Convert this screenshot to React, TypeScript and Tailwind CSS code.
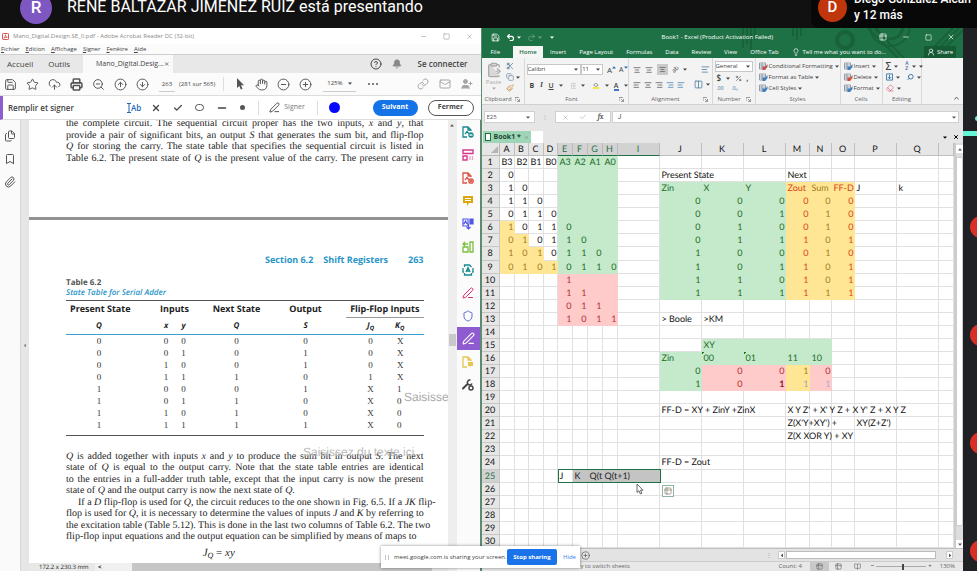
import React from 'react';
import {
  AlignCenter, AlignLeft, AlignRight, ArrowDownCircle, ArrowUpCircle, Bell, Bookmark, Check, CircleHelp,
  ClipboardPaste, CloudUpload, Copy, Files, Hand, Lightbulb, Link, Mail, Minus, MinusCircle,
  Paperclip, PenLine, Percent, PlusCircle, Printer, Redo2, Save, Scissors, Search, Shield, Square, Star, Undo2,
  UserPlus, UserRound, X, ZoomOut, Table2, Paintbrush, Eraser, TextAlignStart, Columns2, BookOpen,
} from 'lucide-react';

const ui = "font-['Open_Sans','Noto_Sans',sans-serif]";

function Caret({ className = '' }: { className?: string }) {
  return (
    <svg viewBox="0 0 4 3" className={`h-[3px] w-1 shrink-0 ${className}`} aria-hidden="true">
      <path d="M0 .5h4L2 2.8z" fill="currentColor" />
    </svg>
  );
}

function IconButton({ label, children, className = '' }: { label: string; children: React.ReactNode; className?: string }) {
  return (
    <button type="button" aria-label={label} className={`flex shrink-0 items-center justify-center ${className}`}>
      {children}
    </button>
  );
}

/* ---------- Meet header ---------- */

function MeetHeader() {
  return (
    <header className="flex h-7 shrink-0 justify-between overflow-hidden bg-[#111111] font-[Roboto,sans-serif] text-white">
      <div className="flex items-start">
        <span className="-mt-2 ml-5 flex size-8 items-center justify-center rounded-full bg-[#7e57c2] text-[17px] font-medium">R</span>
        <h1 className="-mt-1 ml-[15px] text-base leading-[22px] whitespace-nowrap">RENE BALTAZAR JIMENEZ RUIZ está presentando</h1>
      </div>
      <div className="flex w-[166px] items-start overflow-hidden rounded-bl-lg bg-[#080808] pl-[7px]">
        <span className="-mt-[7px] flex size-[29px] shrink-0 items-center justify-center rounded-full bg-[#bf360c] text-[15px] font-medium">D</span>
        <p className="-mt-[9px] ml-[7px] text-xs leading-4 font-medium whitespace-nowrap">
          Diego Gonzalez Alcan
          <br />y 12 más
        </p>
      </div>
    </header>
  );
}

/* ---------- Acrobat ---------- */

const toolGlyph = 'size-[13px] text-[#555555]';

function AcrobatChrome() {
  return (
    <div className={`shrink-0 text-[#444444] ${ui}`}>
      <div className="flex h-4 items-center bg-white pr-2 pl-0.5 text-[6px] text-[#8a8a8a]">
        <svg viewBox="0 0 8 8" className="mr-1 size-[7px]" aria-hidden="true">
          <rect x=".5" y=".5" width="7" height="7" rx="1" fill="#fff" stroke="#c33" />
          <path d="M2 6c1-1 2-3 2-4 0 2 1 3 2 3-2 0-3 0-4 1z" fill="none" stroke="#c33" strokeWidth=".8" />
        </svg>
        <span className="flex-1 whitespace-nowrap">Mano_Digital.Design.SE_0.pdf - Adobe Acrobat Reader DC (32-bit)</span>
        <span className="flex items-center gap-4 text-[#999999]">
          <Minus size={7} /><Square size={7} /><X size={7} />
        </span>
      </div>
      <nav className="flex h-2.5 items-center gap-1.5 bg-[#fbfbfb] pl-px text-[6px] leading-[10px]">
        {['Fichier', 'Edition', 'Affichage', 'Signer', 'Fenêtre', 'Aide'].map((m) => (
          <button key={m} type="button"><span className="underline">{m[0]}</span>{m.slice(1)}</button>
        ))}
      </nav>
      <div className="flex h-[19px] items-center border-t border-[#cfcfcf] bg-[#e8e8e8] text-[8px] leading-[18px]">
        <button type="button" className="ml-[7px]">Accueil</button>
        <button type="button" className="mr-[13px] ml-[15px]">Outils</button>
        <div className="flex h-full w-[90px] items-center justify-between bg-[#fafafa] pr-1 pl-[13px] text-[7px]">
          <span>Mano_Digital.Desig...</span>
          <X size={6} strokeWidth={3} />
        </div>
        <span className="flex-1" />
        <CircleHelp size={12} className="mr-2.5" />
        <Bell size={10} fill="#888888" className="mr-4 text-[#888888]" />
        <button type="button" className="mr-[13px] font-semibold">Se connecter</button>
      </div>
      <div className="flex h-[23px] items-center border-b border-[#dddddd] bg-[#fbfbfb] pl-1">
        <div className="flex items-center gap-[9px]">
          <IconButton label="Enregistrer"><Save className={toolGlyph} strokeWidth={1.8} /></IconButton>
          <IconButton label="Favoris"><Star className={toolGlyph} strokeWidth={1.8} /></IconButton>
          <IconButton label="Envoyer"><CloudUpload className={toolGlyph} strokeWidth={1.8} /></IconButton>
          <IconButton label="Imprimer"><Printer className={toolGlyph} strokeWidth={2.8} /></IconButton>
          <IconButton label="Rechercher"><ZoomOut className={toolGlyph} strokeWidth={1.8} /></IconButton>
          <IconButton label="Page précédente"><ArrowUpCircle className={toolGlyph} strokeWidth={1.8} /></IconButton>
          <IconButton label="Page suivante"><ArrowDownCircle className={toolGlyph} strokeWidth={1.8} /></IconButton>
        </div>
        <input aria-label="Page" defaultValue="263" className="ml-2.5 h-4 w-4 border-b border-[#cccccc] text-center text-[6px]" />
        <span className="ml-1 text-[6px] whitespace-nowrap">(281 sur 565)</span>
        <span className="mr-2.5 ml-2 h-3.5 w-px bg-[#dddddd]" />
        <div className="flex items-center gap-[9px]">
          <IconButton label="Sélection">
            <svg viewBox="0 0 12 12" className="size-3" fill="#555555"><path d="M3 0v10l2.300-2 1.500 3.500 1.700-.8L7 7.300h3z" /></svg>
          </IconButton>
          <IconButton label="Main"><Hand className={toolGlyph} strokeWidth={1.8} /></IconButton>
          <IconButton label="Zoom arrière"><MinusCircle className={toolGlyph} strokeWidth={1.8} /></IconButton>
          <IconButton label="Zoom avant"><PlusCircle className={toolGlyph} strokeWidth={1.8} /></IconButton>
        </div>
        <div className="ml-[11px] flex h-4 w-[33px] items-center justify-between border-b border-[#cccccc] px-1 text-[6px]">
          <select aria-label="Zoom" className="w-[18px] appearance-none"><option>125%</option></select>
          <Caret />
        </div>
        <span className="ml-3 flex gap-[2px]">
          {[0, 1, 2].map((i) => <i key={i} className="size-[2px] rounded-full bg-[#555555]" />)}
        </span>
        <span className="flex-1" />
        <div className="mr-2 flex gap-2.5 text-[#a5a5a5]">
          <Link size={12} /><Mail size={12} /><UserPlus size={12} fill="#a5a5a5" />
        </div>
      </div>
      <div className="flex h-6 items-center border-b border-l-[3px] border-[#dddddd] border-l-[#8b5fd0] bg-white pr-[7px] pl-[5px]">
        <span className="w-[119px] text-[8px] font-semibold whitespace-nowrap">Remplir et signer</span>
        <button type="button" className="flex items-center text-[8px] font-semibold text-[#1b65b5]">
          <svg viewBox="0 0 4 10" className="h-2.5 w-1" aria-hidden="true"><path d="M0 .5h4M0 9.5h4M2 .5v9" stroke="currentColor" fill="none" /></svg>Ab
        </button>
        <div className="ml-2.5 flex items-center gap-3">
          <X size={10} strokeWidth={3} />
          <Check size={10} strokeWidth={3} />
          <span className="h-[7px] w-[9px] rounded-full border border-[#555555]" />
          <Minus size={12} strokeWidth={3} />
          <span className="size-[5px] rounded-full bg-[#555555]" />
        </div>
        <span className="mr-2.5 ml-[13px] h-3.5 w-px bg-[#dddddd]" />
        <button type="button" className="flex items-center gap-1 text-[7px] text-[#777777]"><PenLine size={11} className="text-[#444444]" />Signer</button>
        <span className="mr-[11px] ml-3 h-3.5 w-px bg-[#dddddd]" />
        <span className="size-[11px] rounded-full bg-[#0808ff]" />
        <span className="flex-1" />
        <button type="button" className="h-4 w-[45px] rounded-full bg-[#1473e6] text-[7px] font-bold text-white">Suivant</button>
        <button type="button" className="ml-2.5 h-4 w-[46px] rounded-full border border-[#555555] text-[7px] font-bold">Fermer</button>
      </div>
    </div>
  );
}

function Justified({ children, last = true, indent = false }: { children: React.ReactNode; last?: boolean; indent?: boolean }) {
  return (
    <span className={`block whitespace-nowrap ${last ? '[text-align-last:justify]' : ''} ${indent ? 'pl-3' : ''}`}>{children}</span>
  );
}

const adderRows = [
  ['0', '0', '0', '0', '0', '0', 'X'],
  ['0', '0', '1', '0', '1', '0', 'X'],
  ['0', '1', '0', '0', '1', '0', 'X'],
  ['0', '1', '1', '1', '0', '1', 'X'],
  ['1', '0', '0', '0', '1', 'X', '1'],
  ['1', '0', '1', '1', '0', 'X', '0'],
  ['1', '1', '0', '1', '0', 'X', '0'],
  ['1', '1', '1', '1', '1', 'X', '0'],
];

function AdderTable() {
  return (
    <table className="w-full table-fixed border-y border-[#555555] text-center">
      <colgroup>
        <col className="w-[66px]" /><col className="w-[25px]" /><col className="w-[18px]" /><col className="w-[17px]" />
        <col className="w-[89px]" /><col className="w-[49px]" /><col className="w-[16px]" /><col className="w-[49px]" /><col />
      </colgroup>
      <thead className={`text-[8px] leading-4 font-bold text-[#222222] ${ui}`}>
        <tr className="h-4 text-[9px] whitespace-nowrap">
          <th className="pl-1 text-left">Present State</th><th /><th colSpan={2}>Inputs</th>
          <th>Next State</th><th>Output</th><th /><th colSpan={2} className="border-b border-[#999999]">Flip-Flop Inputs</th>
        </tr>
        <tr className="h-[17px] border-b border-[#3aa0d0] italic">
          <th>Q</th><th /><th>x</th><th>y</th><th>Q</th><th>S</th><th /><th>J<sub className="text-[6px]">Q</sub></th><th className="pr-3 text-left">K<sub className="text-[6px]">Q</sub></th>
        </tr>
      </thead>
      <tbody className="text-[9px] leading-3 text-[#333333]">
        {adderRows.map((r, i) => (
          <tr key={i} className="h-3">
            <td>{r[0]}</td><td /><td>{r[1]}</td><td>{r[2]}</td><td>{r[3]}</td><td>{r[4]}</td><td /><td>{r[5]}</td><td className="pl-[2px] text-left">{r[6]}</td>
          </tr>
        ))}
        <tr className="h-1"><td /></tr>
      </tbody>
    </table>
  );
}

function PdfPage() {
  return (
    <div className="relative flex min-w-0 flex-1 flex-col overflow-hidden bg-white font-['Liberation_Serif','Times_New_Roman',serif] text-[10px] text-[#222222] [text-rendering:geometricPrecision]">
      <div className="flex h-[100px] shrink-0 flex-col border-b-[3px] border-[#929292] pr-6 pl-[37px]">
        <p className="-mt-[2px] flex h-[46px] shrink-0 flex-col justify-between leading-[11px]">
          <Justified>the complete circuit. The sequential circuit proper has the two inputs, <i>x</i> and <i>y</i>, that</Justified>
          <Justified>provide a pair of significant bits, an output <i>S</i> that generates the sum bit, and flip-flop</Justified>
          <Justified><i>Q</i> for storing the carry. The state table that specifies the sequential circuit is listed in</Justified>
          <Justified>Table 6.2. The present state of <i>Q</i> is the present value of the carry. The present carry in</Justified>
        </p>
      </div>
      <div className="flex flex-col pr-6 pl-[37px] pt-[34px]">
        <div className={`flex justify-end text-[9px] leading-3 font-bold text-[#2795c8] ${ui}`}>
          <span>Section 6.2</span><span className="ml-2.5">Shift Registers</span><span className="ml-5">263</span>
        </div>
        <div className={`mt-3 text-[8px] leading-[10px] ${ui}`}>
          <p className="font-bold text-[#555555]">Table 6.2</p>
          <p className="mb-[2px] font-semibold text-[#2795c8] italic">State Table for Serial Adder</p>
        </div>
        <AdderTable />
        <p className="mt-[15px] flex h-[92px] flex-col justify-between leading-[11px]">
          <Justified><i>Q</i> is added together with inputs <i>x</i> and <i>y</i> to produce the sum bit in output <i>S</i>. The next</Justified>
          <Justified>state of <i>Q</i> is equal to the output carry. Note that the state table entries are identical</Justified>
          <Justified>to the entries in a full-adder truth table, except that the input carry is now the present</Justified>
          <Justified last={false}>state of <i>Q</i> and the output carry is now the next state of <i>Q</i>.</Justified>
          <Justified indent>If a <i>D</i> flip-flop is used for <i>Q</i>, the circuit reduces to the one shown in Fig. 6.5. If a <i>JK</i> flip-</Justified>
          <Justified>flop is used for <i>Q</i>, it is necessary to determine the values of inputs <i>J</i> and <i>K</i> by referring to</Justified>
          <Justified>the excitation table (Table 5.12). This is done in the last two columns of Table 6.2. The two</Justified>
          <Justified last={false}>flip-flop input equations and the output equation can be simplified by means of maps to</Justified>
        </p>
        <p className="mt-1 pr-[52px] text-center text-[11px] leading-3 italic">J<sub className="text-[8px]">Q</sub> <span className="not-italic">=</span> xy</p>
      </div>
      <span className="absolute top-[270px] left-[375px] font-['Liberation_Sans',sans-serif] text-xs leading-[14px] whitespace-nowrap text-[#aaaaaa]">Saisissez du texte ici</span>
      <span className="absolute top-[325px] left-[274px] font-['Liberation_Sans',sans-serif] text-xs leading-[14px] whitespace-nowrap text-[#bbbbbb]">Saisissez du texte ici</span>
      <div className={`absolute inset-x-0 bottom-0 flex h-2 items-center bg-[#e8e8e8] text-[6px] leading-[8px] ${ui}`}>
        <span className="ml-2.5 w-[56px] whitespace-nowrap">172.2 x 230.3 mm</span>
        <span className="w-[37px] bg-[#f0f0f0] pl-[3px] font-bold">&lt;</span>
        <span className="h-full w-[300px] bg-[#c6c6c6]" />
      </div>
    </div>
  );
}

function RightTools() {
  const cell = 'flex h-[23px] w-full items-center justify-center';
  return (
    <aside className="flex w-6 shrink-0 flex-col border-r border-[#5f8a72] bg-[#fbfbfb]">
      <IconButton label="Exporter" className={cell}>
        <svg viewBox="0 0 12 12" className="size-3" fill="none" stroke="#188a8f" strokeWidth="1.3"><path d="M5 11H1V1h5l3 3v1M6 1v3h3M3 8c1-1 2-2 2-3 0 1 1 2 2 2" /><circle cx="9" cy="9" r="2.7" fill="#188a8f" stroke="none" /><path d="M7.5 9h3" stroke="#fff" /></svg>
      </IconButton>
      <IconButton label="Organiser" className={cell}>
        <svg viewBox="0 0 12 12" className="size-3" fill="none" stroke="#d83790" strokeWidth="1.4"><path d="M1 1h10v3.5H1zM1 7h4v4H1z" /><path d="M8 7v4M10.500 7v4" stroke="#e9a5c8" /></svg>
      </IconButton>
      <IconButton label="Créer" className={cell}>
        <svg viewBox="0 0 12 12" className="size-3" fill="none" stroke="#df5145" strokeWidth="1.3"><path d="M5 11H1V1h5l3 3v1M6 1v3h3M3 8c1-1 2-2 2-3 0 1 1 2 2 2" /><circle cx="9" cy="9" r="2.2" fill="#fff" /><path d="M9 7.500v3M7.500 9h3" /></svg>
      </IconButton>
      <IconButton label="Commentaire" className={cell}>
        <svg viewBox="0 0 12 12" className="size-3"><path d="M1 1h10v7H7l-2 3V8H1z" fill="#dba90c" /><path d="M3 3.500h6M3 5.500h6" stroke="#fff" /></svg>
      </IconButton>
      <IconButton label="Combiner" className={cell}>
        <svg viewBox="0 0 12 12" className="size-3" fill="none" stroke="#5258e4" strokeWidth="1.2"><path d="M1 1h5v7H1zM2 6l1.500-3L5 6" /><path d="M8 1h3v5H8z" fill="#5258e4" /><path d="M6.500 6v5M4.500 9l2 2 2-2" /></svg>
      </IconButton>
      <IconButton label="Pages" className={cell}>
        <svg viewBox="0 0 12 12" className="size-3" fill="none" stroke="#7cbf3c" strokeWidth="1.3"><path d="M1 6h5v5H1zM8 1h3v10H8zM1 3h5M3 1L1 3l2 2" /></svg>
      </IconButton>
      <IconButton label="Compresser" className={cell}>
        <svg viewBox="0 0 12 12" className="size-3" fill="none" stroke="#188a8f" strokeWidth="1.3"><path d="M2.500 3V1h5l2 2M2.500 9v2h7V9M1 4v4h1M11 4v4h-1M4 8l2-4.500L8 8M4.500 7h3" /></svg>
      </IconButton>
      <IconButton label="Modifier" className={cell}><PenLine size={12} className="text-[#d8276f]" /></IconButton>
      <IconButton label="Protéger" className={cell}><Shield size={12} className="text-[#5a6fd8]" /></IconButton>
      <IconButton label="Remplir et signer" className={`${cell} bg-[#8e5bd1]`}><PenLine size={13} className="text-white" /></IconButton>
      <IconButton label="Envoyer" className={cell}>
        <svg viewBox="0 0 12 12" className="size-3" fill="none" stroke="#e8c64e" strokeWidth="1.3"><path d="M5 11H1V1h5l3 3v1M6 1v3h3" /><path d="M6 6h5v4H9l-1 1V10H6z" fill="#e8c64e" stroke="none" /></svg>
      </IconButton>
      <IconButton label="Plus d'outils" className={cell}>
        <svg viewBox="0 0 12 12" className="size-3" fill="none" stroke="#444444"><path d="M1 9.500L5 5.500" strokeWidth="2" strokeLinecap="round" /><path d="M8.500 1.200A2.400 2.400 0 1 0 10 4.500" strokeWidth="1.600" /><circle cx="9" cy="9" r="2" strokeWidth="1.500" /></svg>
      </IconButton>
    </aside>
  );
}

function Acrobat() {
  return (
    <section className="flex min-w-0 grow-[481] basis-0 flex-col bg-white">
      <AcrobatChrome />
      <div className="flex min-h-0 flex-1">
        <aside className="flex w-5 shrink-0 flex-col items-center gap-[11px] bg-[#fafafa] pt-2.5 text-[#555555]">
          <Files size={12} /><Bookmark size={12} /><Paperclip size={12} />
        </aside>
        <div className="flex w-[9px] shrink-0 items-center justify-center border-l border-[#d8d8d8] bg-[#e6e6e6] text-[#888888]">
          <Caret className="rotate-90" />
        </div>
        <PdfPage />
        <div className="flex w-[9px] shrink-0 flex-col items-center bg-[#eeeeee] pt-1 text-[#555555]">
          <Caret className="rotate-180" />
          <span className="mt-[207px] h-3 w-[7px] bg-[#c8c8c8]" />
        </div>
        <RightTools />
      </div>
    </section>
  );
}

/* ---------- Excel ---------- */

const menuTabs = ['Insert', 'Page Layout', 'Formulas', 'Data', 'Review', 'View', 'Office Tab'];

function ExcelTitle() {
  return (
    <div className="relative h-[30px] shrink-0 overflow-hidden bg-[#1e7145] text-[6px] text-white">
      <svg viewBox="0 0 230 30" className="absolute top-0 right-0 h-[30px] w-[230px]" fill="none" stroke="#186139" aria-hidden="true">
        <circle cx="112" cy="12" r="8" strokeWidth="4" />
        <circle cx="157" cy="-2" r="13" strokeWidth="3" /><circle cx="157" cy="-2" r="20" strokeWidth="2" />
        <path d="M10 0v20M14 0v16M18 0v22M22 0v12M60 0v8M64 0v12M68 0v8M190 30l30-30M196 30l30-30M202 30l28-28M135 0l30 30M141 0l30 30" strokeWidth="2" />
      </svg>
      <div className="relative flex h-[18px] items-center pr-2 pl-[9px]">
        <Save size={9} />
        <Undo2 size={9} strokeWidth={3} className="ml-1.5" /><Caret className="ml-0.5" />
        <Redo2 size={9} className="ml-1.5 text-[#6ba588]" /><Caret className="ml-0.5 text-[#6ba588]" />
        <Caret className="ml-2" />
        <span className="flex-1 pl-[26px] text-center whitespace-nowrap">Book1 - Excel (Product Activation Failed)</span>
        <span className="ml-6 flex items-center gap-[15px]">
          <Table2 size={8} /><Minus size={8} /><Square size={7} /><X size={8} />
        </span>
      </div>
      <nav className="relative flex h-3 items-center gap-[13px] pl-[9px] leading-3 whitespace-nowrap">
        <button type="button">File</button>
        <button type="button" className="-mr-1.5 h-3 w-[30px] bg-[#f5f5f5] font-semibold text-[#1e7145]">Home</button>
        {menuTabs.map((m) => <button key={m} type="button">{m}</button>)}
        <button type="button" className="flex items-center gap-[3px]"><Lightbulb size={8} />Tell me what you want to do...</button>
        <button type="button" className="mr-[7px] ml-auto flex h-3 w-8 items-center justify-center gap-0.5 bg-[#155a34]"><UserRound size={8} />Share</button>
      </nav>
    </div>
  );
}

function Group({ label, children, className = '', launcher = false }: { label: string; children: React.ReactNode; className?: string; launcher?: boolean }) {
  return (
    <div className={`flex shrink-0 flex-col border-r border-[#d8d8d8] ${className}`}>
      <div className="min-h-0 flex-1">{children}</div>
      <div className="mb-px flex h-2 items-center text-[6px] leading-[8px] text-[#666666]">
        <span className="flex-1 text-center">{label}</span>
        {launcher && <svg viewBox="0 0 5 5" className="mr-1 size-[5px]" stroke="#777" fill="none"><path d="M0 4V.5h4M2 2l2.500 2.500M4.500 2v2.500H2" strokeWidth=".7" /></svg>}
      </div>
    </div>
  );
}

function TextTool({ icon, label }: { icon: React.ReactNode; label: string }) {
  return (
    <button type="button" className="flex h-[11px] items-center gap-px text-[6px] leading-[11px] whitespace-nowrap">
      {icon}{label}<Caret className="ml-px" />
    </button>
  );
}

function TableGlyph({ accent }: { accent: string }) {
  return (
    <svg viewBox="0 0 9 9" className="size-[9px] shrink-0" aria-hidden="true">
      <path d="M.5 1h6v6h-6zM.5 3h6M.5 5h6M3 1v6" fill="#fff" stroke="#7d8a99" strokeWidth=".8" />
      <path d="M3.500 4.500h3L8.500 2v3L6 8H3.500z" fill={accent} />
    </svg>
  );
}

function Ribbon() {
  return (
    <div className="flex h-[47px] shrink-0 border-b border-[#d0d0d0] bg-[#f3f3f3] text-[#444444]">
      <Group label="Clipboard" launcher className="w-[43px]">
        <div className="flex gap-1 pt-1 pl-1">
          <button type="button" className="flex w-4 flex-col items-center text-[6px] leading-[9px] text-[#aaaaaa]">
            <ClipboardPaste size={16} fill="#d8d8d8" />Paste<Caret />
          </button>
          <div className="flex flex-col gap-[3px]">
            <Scissors size={8} className="text-[#44688c]" />
            <span className="flex items-center gap-[2px]"><Copy size={8} className="text-[#6b86a5]" /><Caret /></span>
            <Paintbrush size={8} className="text-[#c9924a]" />
          </div>
        </div>
      </Group>
      <Group label="Font" launcher className="w-[104px]">
        <div className="flex items-center pt-1.5 pl-[2px]">
          <div className="flex h-[11px] w-[55px] items-center border border-[#c8c8c8] bg-white pr-0.5 text-[6px]">
            <select aria-label="Font" className="w-full appearance-none"><option>Calibri</option></select><Caret />
          </div>
          <div className="flex h-[11px] w-[22px] items-center border border-[#c8c8c8] bg-white pr-0.5 text-[6px]">
            <select aria-label="Font size" className="w-full appearance-none"><option>11</option></select><Caret />
          </div>
          <span className="ml-1 flex items-center text-[8px] leading-[11px]">A<Caret className="mb-1 rotate-180 text-[#2b6cb0]" /></span>
          <span className="ml-[3px] flex items-center text-[7px] leading-[11px]">A<Caret className="mb-1 text-[#2b6cb0]" /></span>
        </div>
        <div className="flex items-center gap-[5px] pt-[5px] pl-[5px] text-[7px] leading-[11px]">
          <button type="button" className="w-1.5 font-bold">B</button>
          <button type="button" className="w-1.5 font-serif font-bold italic">I</button>
          <button type="button" className="w-1.5 font-semibold underline">U</button><Caret />
          <svg viewBox="0 0 9 9" className="ml-[3px] size-2" fill="none" stroke="#aaaaaa"><path d="M.5.5h8v8h-8zM4.500.500v8M.5 4.500h8" strokeDasharray="1 .6" /></svg><Caret />
          <svg viewBox="0 0 9 9" className="ml-[3px] size-[9px]"><path d="M1 4l3-3 3 3-3 2z" fill="#fff" stroke="#666" /><path d="M0 7h9v2H0z" fill="#f4e600" /></svg><Caret />
          <span className="h-2.5 border-b-2 border-[#4472c4] leading-[9px] font-semibold">A</span><Caret />
        </div>
      </Group>
      <Group label="Alignment" launcher className="w-[84px]">
        <div className="flex items-center gap-1 pt-1.5 pl-1">
          <AlignCenter size={8} /><AlignCenter size={8} />
          <span className="bg-[#c9c9c9] p-[2px]"><AlignCenter size={7} /></span>
          <span className="-rotate-45 text-[6px] leading-[11px]">ab</span><Caret />
          <TextAlignStart size={9} className="ml-2.5 text-[#44779c]" />
        </div>
        <div className="flex items-center gap-[3px] pt-[5px] pl-1">
          <AlignLeft size={8} /><AlignCenter size={8} /><AlignRight size={8} />
          <AlignRight size={8} className="text-[#2f6fa8]" /><AlignLeft size={8} className="text-[#2f6fa8]" />
          <Columns2 size={9} className="ml-1.5 text-[#44779c]" /><Caret />
        </div>
      </Group>
      <Group label="Number" launcher className="w-[43px]">
        <div className="pt-[3px] pl-[2px]">
          <div className="flex h-[11px] w-[38px] items-center border border-[#c8c8c8] bg-white pr-0.5 text-[6px]">
            <select aria-label="Number format" className="w-full appearance-none"><option>General</option></select><Caret />
          </div>
        </div>
        <div className="flex items-center justify-between pr-1.5 pl-1 text-[8px] leading-3 font-semibold"><span>$</span><Caret /><Percent size={7} /><span>,</span></div>
        <div className="flex gap-2 pl-1 text-[5px] leading-[9px] text-[#2f6fa8]"><span>.00</span><span>.0₀</span></div>
      </Group>
      <Group label="Styles" className="w-[85px]">
        <div className="pt-[3px] pl-[3px]">
          <TextTool icon={<TableGlyph accent="#c0504d" />} label="Conditional Formatting" />
          <TextTool icon={<TableGlyph accent="#3f7fbf" />} label="Format as Table" />
          <TextTool icon={<TableGlyph accent="#3f7fbf" />} label="Cell Styles" />
        </div>
      </Group>
      <Group label="Cells" className="w-[42px]">
        <div className="pt-[3px] pl-[3px]">
          <TextTool icon={<TableGlyph accent="#3f7fbf" />} label="Insert" />
          <TextTool icon={<TableGlyph accent="#d0503d" />} label="Delete" />
          <TextTool icon={<TableGlyph accent="#3f7fbf" />} label="Format" />
        </div>
      </Group>
      <Group label="Editing" className="w-[39px]">
        <div className="flex flex-col gap-px pt-[3px] pl-[3px]">
          <div className="flex h-[10px] items-center gap-[3px] text-[10px] font-semibold">Σ<Caret /><span className="ml-1 text-[5px] leading-[5px] text-[#3f6cab]">A<br />Z</span><Caret /><Caret /></div>
          <div className="flex h-[10px] items-center gap-[3px]">
            <svg viewBox="0 0 8 8" className="size-2" fill="none" stroke="#2f6fa8"><path d="M.5.5h7v7h-7zM4 1.500v4.500M2 4l2 2 2-2" /></svg>
            <Caret /><Search size={8} strokeWidth={3} className="ml-1 -scale-x-100 text-[#2f6fa8]" /><Caret />
          </div>
          <div className="flex h-[10px] items-center gap-[3px]"><Eraser size={8} className="text-[#d8607a]" /><Caret /></div>
        </div>
      </Group>
      <span className="mr-1 ml-auto self-end text-[#666666]"><svg viewBox="0 0 5 4" className="mb-1 h-1 w-[5px]" fill="none" stroke="currentColor"><path d="M.5 3.500l2-2.500 2 2.500" /></svg></span>
    </div>
  );
}

function FormulaBar() {
  return (
    <div className="flex h-[25px] shrink-0 items-center bg-[#e6e6e6] pr-1 pb-px pl-[2px] text-[6px] text-[#555555]">
      <div className="flex h-3 w-[51px] items-center border border-[#d0d0d0] bg-white pr-1 pl-0.5">
        <input aria-label="Name box" defaultValue="E25" className="w-full min-w-0" /><Caret />
      </div>
      <span className="mx-[7px] text-[#aaaaaa]">⋮</span>
      <div className="flex h-3 w-[56px] items-center justify-between border border-[#d0d0d0] bg-white px-1.5">
        <X size={7} className="text-[#aaaaaa]" /><Check size={8} className="text-[#aaaaaa]" /><i className="font-serif text-[7px] font-bold">fx</i>
      </div>
      <div className="ml-px flex h-3 flex-1 items-center border border-[#d0d0d0] bg-white pr-[2px] pl-[5px]">
        <input aria-label="Formula" defaultValue="J" className="w-full font-[Roboto,sans-serif] text-[7px]" /><Caret />
      </div>
    </div>
  );
}

const columns = [
  { name: 'A', w: 'w-[15px]' }, { name: 'B', w: 'w-[14px]' }, { name: 'C', w: 'w-[15px]' }, { name: 'D', w: 'w-[14px]' },
  { name: 'E', w: 'w-[15px]' }, { name: 'F', w: 'w-[15px]' }, { name: 'G', w: 'w-[15px]' }, { name: 'H', w: 'w-[15px]' },
  { name: 'I', w: 'w-[42px]' }, { name: 'J', w: 'w-[42px]' }, { name: 'K', w: 'w-[42px]' }, { name: 'L', w: 'w-[42px]' },
  { name: 'M', w: 'w-[24px]' }, { name: 'N', w: 'w-[22px]' }, { name: 'O', w: 'w-[23px]' }, { name: 'P', w: 'w-[42px]' },
  { name: 'Q', w: 'w-[42px]' }, { name: '', w: '' },
];

const cells: Record<number, Record<string, string>> = {
  1: { A: 'B3', B: 'B2', C: 'B1', D: 'B0', E: 'A3', F: 'A2', G: 'A1', H: 'A0' },
  2: { A: '0', J: 'Present State', M: 'Next' },
  3: { A: '1', B: '0', J: 'Zin', K: 'X', L: 'Y', M: 'Zout', N: 'Sum', O: 'FF-D', P: 'J', Q: 'k' },
  4: { A: '1', B: '1', C: '0', J: '0', K: '0', L: '0', M: '0', N: '0', O: '0' },
  5: { A: '0', B: '1', C: '1', D: '0', J: '0', K: '0', L: '1', M: '0', N: '1', O: '0' },
  6: { A: '1', B: '0', C: '1', D: '1', E: '0', J: '0', K: '1', L: '0', M: '0', N: '1', O: '0' },
  7: { A: '0', B: '1', C: '0', D: '1', E: '1', F: '0', J: '0', K: '1', L: '1', M: '1', N: '0', O: '1' },
  8: { A: '1', B: '0', C: '1', D: '0', E: '1', F: '1', G: '0', J: '1', K: '0', L: '0', M: '0', N: '1', O: '0' },
  9: { A: '0', B: '1', C: '0', D: '1', E: '0', F: '1', G: '1', H: '0', J: '1', K: '0', L: '1', M: '1', N: '0', O: '1' },
  10: { E: '1', J: '1', K: '1', L: '0', M: '1', N: '0', O: '1' },
  11: { E: '1', F: '1', J: '1', K: '1', L: '1', M: '1', N: '1', O: '1' },
  12: { E: '0', F: '1', G: '1' },
  13: { E: '1', F: '0', G: '1', H: '1', J: '> Boole', K: '>KM' },
  15: { K: 'XY' },
  16: { J: 'Zin', K: '00', L: '01', M: '11', N: '10' },
  17: { J: '0', K: '0', L: '0', M: '1', N: '0' },
  18: { J: '1', K: '0', L: '1', M: '1', N: '1' },
  20: { J: 'FF-D = XY + ZinY +ZinX', M: "X Y Z' + X' Y Z + X Y' Z + X Y Z" },
  21: { M: "Z(X'Y+XY') +", P: "XY(Z+Z')" },
  22: { M: 'Z(X XOR Y) + XY' },
  24: { J: 'FF-D = Zout' },
  25: { E: 'J', F: 'K', G: 'Q(t', H: 'Q(t+1)' },
};

const GREEN = 'bg-[#c4eacb] text-[#1a6b25]';
const RED = 'bg-[#ffcaca] text-[#b03030]';
const YELLOW = 'bg-[#ffe694] text-[#a57a1c]';

function fillOf(r: number, c: string): string {
  const between = (a: string, b: string) => c >= a && c <= b && c !== '';
  if ((c === 'A' && r >= 6 && r <= 9) || (c === 'B' && r >= 7 && r <= 9) || (c === 'C' && r >= 8 && r <= 9) || (c === 'D' && r === 9)) return YELLOW;
  if (between('E', 'H') && r <= 9) return GREEN;
  if (between('E', 'H') && r <= 13) return RED;
  if (between('J', 'L') && r >= 3 && r <= 11) return GREEN;
  if (between('M', 'O') && r >= 3 && r <= 11) return c === 'N' ? YELLOW : 'bg-[#ffe694] text-[#d8441a]';
  if ((r === 15 && between('K', 'N')) || (r === 16 && between('J', 'N')) || ((r === 17 || r === 18) && c === 'J')) return GREEN;
  if (r === 17 || r === 18) {
    if (c === 'M') return r === 18 ? 'bg-[#ffe694] text-[#9aa5b5]' : YELLOW;
    if (c === 'L' && r === 18) return 'bg-[#ffcaca] text-[#8c1515] font-bold';
    if (c === 'N' && r === 18) return 'bg-[#ffcaca] text-[#b9a5d8]';
    if (between('K', 'N')) return RED;
  }
  if (r === 25 && between('F', 'I')) return 'bg-[#c4c4c4] text-[#222222]';
  return '';
}

function Sheet() {
  return (
    <div className="flex min-h-0 flex-1 bg-[#e6e6e6]">
      <div className="relative min-w-0 flex-1 overflow-hidden bg-white">
        <table className="h-full w-full table-fixed border-separate border-spacing-0 font-[Lato,Carlito,sans-serif] text-[9px] leading-3 text-[#111111] [text-rendering:geometricPrecision]">
          <colgroup>
            <col className="w-[18px]" />
            {columns.map((c, i) => <col key={i} className={c.w} />)}
          </colgroup>
          <thead>
            <tr className="h-[13px]">
              <th className="border-r border-b border-[#b8b8b8] bg-[#e6e6e6] p-0"><svg viewBox="0 0 10 10" className="ml-auto size-[9px]"><path d="M9 1v8H1z" fill="#b5b5b5" /></svg></th>
              {columns.map(({ name }, i) => (
                <th key={i} scope="col" className={`border-r border-b p-0 font-normal ${i >= 4 && i <= 8 ? 'border-r-[#bbbbbb] border-b-[#1e7145] bg-[#d2d2d2] text-[#1e7145]' : 'border-[#bfbfbf] bg-[#e6e6e6]'}`}>{name}</th>
              ))}
            </tr>
          </thead>
          <tbody>
            {Array.from({ length: 30 }, (_, k) => k + 1).map((r) => (
              <tr key={r}>
                <th scope="row" className={`border-r border-b border-[#c6c6c6] p-0 font-normal ${r === 25 ? 'bg-[#d2d2d2] text-[#1e7145]' : 'bg-[#e6e6e6]'}`}>{r}</th>
                {columns.map(({ name }, i) => {
                  const text = cells[r]?.[name] ?? '';
                  const fill = fillOf(r, name);
                  const numeric = /^[01]$/.test(text);
                  return (
                    <td key={i} className={`border-r border-b p-0 whitespace-nowrap ${fill ? 'border-transparent' : 'border-[#e0e0e0]'} ${fill} ${numeric ? 'text-right' : 'pl-[2px]'} ${r === 16 && (name === 'K' || name === 'L') ? 'bg-[linear-gradient(135deg,#1a6b25_2px,transparent_2px)] bg-origin-border bg-no-repeat' : ''}`}>
                      {text}
                    </td>
                  );
                })}
              </tr>
            ))}
          </tbody>
        </table>
        <div className="absolute top-[326px] left-[76px] h-[14px] w-[103px] border border-[#1e7145]" />
        <svg viewBox="0 0 8 12" className="absolute top-[340px] left-[154px] h-3 w-2" fill="#ffffff" stroke="#555555" strokeWidth=".9"><path d="M1 1v8.500l2-1.800L4.400 11l1.400-.600L4.500 7.200H7z" /></svg>
        <button type="button" aria-label="Quick analysis" className="absolute top-[342px] left-[180px] flex size-3 items-center justify-center border border-[#8fb5a0] bg-white">
          <Table2 size={8} className="text-[#8a7a66]" />
        </button>
      </div>
      <div className="flex w-[9px] shrink-0 flex-col items-center border-l-2 border-[#cccccc] bg-[#dddddd] pt-[2px] text-[#555555]">
        <span className="flex h-2 w-[7px] items-center justify-center bg-white"><Caret className="rotate-180" /></span>
        <span className="mt-1 mb-3.5 w-[7px] flex-1 border border-[#cccccc] bg-white" />
        <span className="flex h-2 w-[7px] items-center justify-center bg-white"><Caret /></span>
      </div>
    </div>
  );
}

function Excel() {
  return (
    <section className={`flex min-w-0 grow-[482] basis-0 flex-col border-l border-[#5f8a72] bg-[#e6e6e6] ${ui}`}>
      <ExcelTitle />
      <Ribbon />
      <FormulaBar />
      <div className="flex h-[13px] shrink-0 items-end pl-px">
        <div className="flex h-3 w-[48px] items-center gap-[3px] bg-[#9fd5b7] pl-[2px] text-[7px] font-bold text-[#1d4a32]">
          <span className="h-2 w-1.5 border border-[#1e7145] bg-white" />Book1 *<X size={5} className="text-[#777777]" />
        </div>
        <span className="h-3 w-3 bg-white" />
        <span className="mr-1 ml-auto flex h-3 items-center gap-1.5 text-black"><Caret /><X size={6} strokeWidth={4} /></span>
      </div>
      <Sheet />
      <div className="flex h-[13px] shrink-0 items-center justify-end border-t border-[#c0c0c0] bg-[#e3e3e3] pr-2.5 text-[#555555]">
        <PlusCircle size={9} strokeWidth={1.8} className="mr-auto ml-[99px]" />
        <span className="mr-1.5 text-[6px] text-[#999999]">⋮</span>
        <span className="flex h-2 w-[7px] items-center justify-center border border-[#cccccc] bg-white"><Caret className="rotate-90" /></span>
        <span className="mr-2.5 ml-px h-2 w-[150px] border border-[#bbbbbb] bg-white" />
        <span className="flex h-2 w-[7px] items-center justify-center border border-[#cccccc] bg-white"><Caret className="-rotate-90" /></span>
      </div>
      <footer className="flex h-2.5 shrink-0 items-center border-t border-[#cccccc] bg-[#e8e8e8] pr-2 text-[6px] leading-[9px] text-[#666666]">
        <span className="ml-[99px] flex-1 whitespace-nowrap">y to switch sheets</span>
        <span className="mr-2">Count: 4</span>
        <span className="flex w-[19px] justify-center bg-[#c8c8c8] py-px"><Table2 size={7} /></span>
        <span className="flex w-[19px] justify-center"><Table2 size={7} /></span>
        <span className="flex w-[19px] justify-center"><BookOpen size={7} /></span>
        <label className="ml-1 flex items-center gap-[2px] font-bold">
          −
          <span className="relative flex h-2 w-[50px] items-center">
            <span className="h-px w-full bg-[#aaaaaa]" />
            <span className="absolute top-px left-[26px] h-1.5 w-[2px] bg-[#444444]" />
            <input type="range" aria-label="Zoom" defaultValue={52} className="absolute inset-0 h-2 w-full opacity-0" />
          </span>
          +
        </label>
        <span className="ml-2">130%</span>
      </footer>
    </section>
  );
}

/* ---------- Meet participants strip ---------- */

function MeetStrip() {
  return (
    <aside className="flex w-3.5 shrink-0 flex-col overflow-hidden bg-[#202124]">
      <span className="mt-[88px] ml-3 size-[5px] rounded-full bg-[#64f5d6]" />
      <span className="mt-2.5 h-[5px] shrink-0 bg-[#64f5d6]" />
      <div className="mt-[80px] ml-[7px] flex flex-col gap-[86px]">
        {[0, 1, 2, 3].map((i) => <span key={i} className="size-[22px] shrink-0 rounded-full bg-[#d93025]" />)}
      </div>
    </aside>
  );
}

function ShareBar() {
  return (
    <div className={`absolute bottom-[3px] left-[381px] flex h-[22px] w-[199px] items-center bg-white text-[6px] text-[#444444] shadow-[0_0_3px_rgba(0,0,0,0.45)] ${ui}`}>
      <span className="ml-1 h-[5px] w-1 border-x border-[#c4c4c4]" />
      <span className="ml-[5px] w-[113px] whitespace-nowrap">meet.google.com is sharing your screen.</span>
      <button type="button" className="h-4 w-[50px] rounded-[2px] bg-[#1a73e8] font-bold text-white">Stop sharing</button>
      <a href="#hide" className="ml-1.5 text-[#3b82e8]">Hide</a>
    </div>
  );
}

export default function App() {
  return (
    <div className="flex h-screen flex-col overflow-hidden bg-white pb-3">
      <MeetHeader />
      <main className="relative flex min-h-0 flex-1">
        <Acrobat />
        <Excel />
        <MeetStrip />
        <ShareBar />
      </main>
    </div>
  );
}
